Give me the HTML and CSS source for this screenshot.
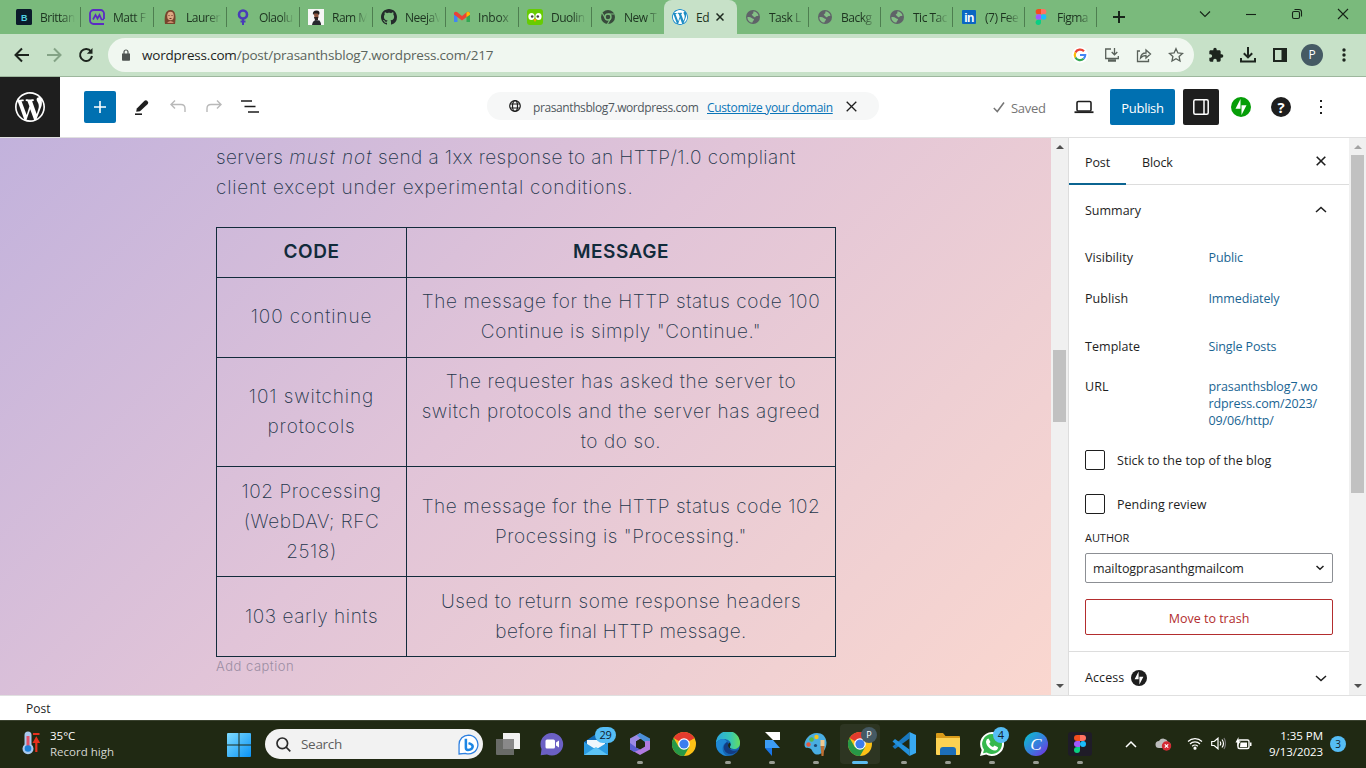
FILE: index.html
```html
<!DOCTYPE html>
<html lang="en">
<head>
<meta charset="utf-8">
<title>Edit Post</title>
<link rel="stylesheet" href="styles.css">
</head>
<body>
<svg class="defs" width="0" height="0">
  <symbol id="wp" viewBox="0 0 20 20"><path d="M20 10c0-5.51-4.49-10-10-10C4.48 0 0 4.49 0 10c0 5.52 4.48 10 10 10 5.51 0 10-4.48 10-10zM7.78 15.37L4.37 6.22c.55-.02 1.17-.08 1.17-.08.5-.06.44-1.13-.06-1.11 0 0-1.45.11-2.37.11-.18 0-.37 0-.58-.01C4.12 2.69 6.87 1.11 10 1.11c2.33 0 4.45.87 6.05 2.34-.68-.11-1.65.39-1.65 1.58 0 .74.45 1.36.9 2.1.35.61.55 1.36.55 2.46 0 1.49-1.4 5-1.4 5l-3.03-8.37c.54-.02.82-.17.82-.17.5-.05.44-1.25-.06-1.22 0 0-1.44.12-2.38.12-.87 0-2.33-.12-2.33-.12-.5-.03-.56 1.2-.06 1.22l.92.08 1.26 3.41zM17.41 10c.24-.64.74-1.87.43-4.25.7 1.29 1.05 2.71 1.05 4.25 0 3.29-1.73 6.24-4.4 7.78.97-2.59 1.94-5.2 2.92-7.78zM6.1 18.09C3.12 16.65 1.11 13.53 1.11 10c0-1.3.23-2.48.72-3.59C3.25 10.3 4.67 14.2 6.1 18.09zm4.03-6.63l2.58 6.98c-.86.29-1.76.45-2.71.45-.79 0-1.57-.11-2.29-.33.81-2.38 1.62-4.74 2.42-7.1z"/></symbol>
  <symbol id="earth" viewBox="0 0 16 16"><circle cx="8" cy="8" r="7" fill="#5f6368"/><path d="M8.500 2.200c2.500.3 4.500 2 5 4.200-1.200.8-2.500.2-3 1.300-.5 1-1.800.6-2.200-.4-.3-.9-1.700-.6-1.500-1.700.2-1 1.500-.8 1.500-1.700zM2.300 8.200c1.700-.3 3.400-.2 4.400.8.8.8 2.400.5 2.300 1.800-.1 1-1.400 1-1.500 2.800-2.900 0-5-2.300-5.200-5.400z" fill="#84bf86"/></symbol>
  <symbol id="chrome" viewBox="0 0 24 24"><circle cx="12" cy="12" r="12" fill="#fbc116"/><path d="M12 12 1.600 6A12 12 0 0 1 22.400 6z" fill="#e33b2e"/><path d="M12 12 22.400 6H12z" fill="#e33b2e"/><path d="M1.600 6A12 12 0 0 0 12 24l5.200-9L12 12 6.800 15z" fill="#279847"/><circle cx="12" cy="12" r="5.800" fill="#fff"/><circle cx="12" cy="12" r="4.600" fill="#3b7ded"/></symbol>
  <symbol id="figma" viewBox="0 0 12 18"><path d="M3 0h3v6H3a3 3 0 0 1 0-6z" fill="#f24e1e"/><path d="M6 0h3a3 3 0 0 1 0 6H6z" fill="#ff7262"/><path d="M3 6h3v6H3a3 3 0 0 1 0-6z" fill="#a259ff"/><circle cx="9" cy="9" r="3" fill="#1abcfe"/><path d="M3 12h3v3a3 3 0 1 1-3-3z" fill="#0acf83"/></symbol>
  <symbol id="bolt" viewBox="0 0 32 32"><circle cx="16" cy="16" r="16"/><path class="zap" d="M15.200 18.700h-8l8-15.500zM16.800 28.800V13.300h8z" fill="#fff"/></symbol>
</svg>
<div class="screen">
  <div class="tabs">
    <div class="tab"><svg class="fav" viewBox="0 0 16 16"><rect width="16" height="16" rx="1.500" fill="#0b1b2b"/><text x="8" y="12" text-anchor="middle" class="fav-b">B</text></svg><span>Brittan</span></div>
    <div class="tab"><svg class="fav" viewBox="0 0 16 16"><path d="M15 10V4.500A3.500 3.500 0 0 0 11.500 1h-7A3.500 3.500 0 0 0 1 4.500v7A3.500 3.500 0 0 0 4.500 15H15" fill="none" stroke="#5b2bc4" stroke-width="1.800"/><path d="M4 10.500 6.500 6l2 3.500 2-3.500 2 4.500H15" fill="none" stroke="#5b2bc4" stroke-width="1.700"/></svg><span>Matt F</span></div>
    <div class="tab"><svg class="fav" viewBox="0 0 16 16"><path d="M3 15C2 8 3 1 8.500 1S14 8 13 15z" fill="#77452d"/><ellipse cx="8.500" cy="7" rx="3.300" ry="4.300" fill="#dfa883"/><path d="M5 14q3.500-4 7 0z" fill="#c98b6b"/><path d="M6.500 6.500h1M9.500 6.500h1M7.500 9.500h2" stroke="#6a3427"/></svg><span>Lauren</span></div>
    <div class="tab"><svg class="fav" viewBox="0 0 16 16"><circle cx="8" cy="5.500" r="4" fill="none" stroke="#493cb8" stroke-width="2.600"/><path d="M8 9v7M5.500 12.500h5" stroke="#493cb8" stroke-width="2"/></svg><span>Olaolu</span></div>
    <div class="tab"><svg class="fav" viewBox="0 0 16 16"><rect width="16" height="16" fill="#f6f6f6"/><path d="M4 16q.5-4 3.500-5l4 .5q1.500 2 1.500 4.500z" fill="#26282e"/><path d="M5.500 3.500h5v5q-1.500 3-3.500 2z" fill="#8d553f"/><path d="M5 6q-.8-4.500 3.500-4.500T11 6L9.500 4.500H6z" fill="#211b1b"/><path d="M6 8h4v3H7z" fill="#2a1f1e"/></svg><span>Ram M</span></div>
    <div class="tab"><svg class="fav" viewBox="0 0 16 16"><path fill="#242b2b" d="M8 0C3.580 0 0 3.580 0 8c0 3.540 2.290 6.530 5.470 7.590.4.070.55-.17.55-.38 0-.19-.01-.82-.01-1.490-2.010.37-2.530-.49-2.690-.94-.09-.23-.48-.94-.82-1.130-.28-.15-.68-.52-.01-.53.63-.01 1.080.58 1.230.82.72 1.210 1.870.87 2.330.66.07-.52.28-.87.51-1.070-1.780-.2-3.640-.89-3.640-3.950 0-.87.31-1.590.82-2.150-.08-.2-.36-1.020.08-2.120 0 0 .67-.21 2.200.82.64-.18 1.320-.27 2-.27s1.360.09 2 .27c1.530-1.040 2.200-.82 2.200-.82.44 1.100.16 1.920.08 2.120.51.56.82 1.270.82 2.150 0 3.070-1.870 3.750-3.650 3.950.29.25.54.73.54 1.480 0 1.070-.01 1.930-.01 2.200 0 .21.15.46.55.38A8 8 0 0 0 16 8c0-4.420-3.580-8-8-8z"/></svg><span>NeejaV</span></div>
    <div class="tab"><svg class="fav" viewBox="0 0 16 16"><path d="M0 3.500v9.500h3.500V6z" fill="#4285f4"/><path d="M16 3.500v9.500h-3.500V6z" fill="#34a853"/><path d="M0 4q1-2 3-1l5 4 5-4q2-1 3 1v1.500l-8 6-8-6z" fill="#ea4335"/><path d="M12.500 3.500 14 2.700q1.500 0 2 1.500v1.500L12.500 8z" fill="#fbbc04"/></svg><span class="wide">Inbox</span></div>
    <div class="tab"><svg class="fav" viewBox="0 0 16 16"><rect width="16" height="16" rx="3" fill="#67cc02"/><ellipse cx="4.500" cy="7.500" rx="3.100" ry="3.500" fill="#fff"/><ellipse cx="11.500" cy="7.500" rx="3.100" ry="3.500" fill="#fff"/><circle cx="5.200" cy="7.500" r="1.300" fill="#444"/><circle cx="10.800" cy="7.500" r="1.300" fill="#444"/><path d="M6 10h4l-2 3z" fill="#f6a500"/></svg><span>Duolin</span></div>
    <div class="tab short nosep"><svg class="fav" viewBox="0 0 16 16"><circle cx="8" cy="8" r="7" fill="#384b3c"/><circle cx="8" cy="8" r="3" fill="none" stroke="#79ba7b" stroke-width="1.400"/><path d="M8 5h6.500M5.500 9.500 2.200 4M10.500 9.500 7.500 15" stroke="#79ba7b" stroke-width="1.200"/></svg><span>New T</span></div>
    <div class="tab short active nosep"><svg class="fav" viewBox="0 0 16 16"><circle cx="8" cy="8" r="8" fill="#fff"/><use href="#wp" x="0" y="0" width="16" height="16" fill="#1e8dc4"/></svg><span>Ed</span><svg class="x" viewBox="0 0 8 8"><path d="M.5.5l7 7m0-7l-7 7" stroke="#1f2a20" stroke-width="1.500"/></svg></div>
    <div class="tab short"><svg class="fav"><use href="#earth"/></svg><span>Task L</span></div>
    <div class="tab short"><svg class="fav"><use href="#earth"/></svg><span>Backg</span></div>
    <div class="tab short"><svg class="fav"><use href="#earth"/></svg><span>Tic Tac</span></div>
    <div class="tab short"><svg class="fav" viewBox="0 0 16 16"><rect x="1" y="1" width="14" height="14" rx="1" fill="#0a66c2"/><text x="8" y="12.500" text-anchor="middle" class="fav-in">in</text></svg><span>(7) Fee</span></div>
    <div class="tab short"><svg class="fav"><use href="#figma"/></svg><span>Figma</span></div>
    <svg class="newtab" viewBox="0 0 12 12"><path d="M6 0v12M0 6h12" stroke="#18261a" stroke-width="2"/></svg>
    <div class="win">
      <svg viewBox="0 0 12 12"><path d="M1 3.500l5 5 5-5" /></svg>
      <svg viewBox="0 0 12 12"><path d="M1 6.500h10"/></svg>
      <svg viewBox="0 0 12 12"><rect x="1.500" y="3.500" width="7" height="7" rx="1.500"/><path d="M3.500 1.500H8Q10.500 1.500 10.500 4v4.500"/></svg>
      <svg viewBox="0 0 12 12"><path d="M1 1l10 10m0-10L1 11"/></svg>
    </div>
  </div>
  <div class="toolbar">
    <svg class="nav" viewBox="0 0 16 16"><path d="M15 8H2.500M8 1.500L1.500 8 8 14.500" stroke="#1c241d"/></svg>
    <svg class="nav" viewBox="0 0 16 16"><path d="M1 8h12.500M8 1.500L14.500 8 8 14.500" stroke="#84a386"/></svg>
    <svg class="nav" viewBox="0 0 16 16"><path d="M13 4.500A6 6 0 1 0 14 9" stroke="#1c241d"/><path d="M14.500 1v5.700H8.800z" fill="#1c241d"/></svg>
    <div class="omni">
      <svg class="lock" viewBox="0 0 8 12"><path d="M0 4.500h8V11q0 .8-.8.8H.8Q0 11.800 0 11z" fill="#4d5350"/><path d="M2 5V3a2 2 0 0 1 4 0v2" fill="none" stroke="#4d5350" stroke-width="1.200"/></svg>
      <div class="url"><b>wordpress.com</b>/post/prasanthsblog7.wordpress.com/217</div>
      <svg class="g" viewBox="0 0 16 16"><circle cx="8" cy="8" r="8" fill="#fff"/><g fill="none" stroke-width="2.200"><path d="M12 4.200A5.300 5.300 0 0 0 3.400 5.500" stroke="#ea4335"/><path d="M3.400 5.500a5.300 5.300 0 0 0 0 5" stroke="#fbbc05"/><path d="M3.400 10.500a5.300 5.300 0 0 0 8.200 1.300" stroke="#34a853"/><path d="M11.600 11.800A5.300 5.300 0 0 0 13.200 8H8" stroke="#4285f4"/></g></svg>
      <svg class="oi" viewBox="0 0 16 16"><path d="M7 2H1.700v9.500h12.600V9M10.500 1v6.500M7.700 5l2.800 2.800L13.300 5"/><path d="M4 13.500h8" stroke-width="2.500"/></svg>
      <svg class="oi" viewBox="0 0 16 16"><path d="M4 4H1.500v10.500h11V12M4.500 11q.5-5 5.500-5V3l4.500 4L10 11V8.500Q6.500 8.500 4.500 11z"/></svg>
      <svg class="oi" viewBox="0 0 16 16"><path d="M8 1.700l1.900 4.200 4.600.5-3.400 3.100.9 4.500L8 11.700 4 14l.9-4.500L1.500 6.400l4.600-.5z"/></svg>
    </div>
    <div class="ext">
      <svg viewBox="0 0 24 24"><path fill="#1d251e" d="M20.500 11H19V7c0-1.100-.9-2-2-2h-4V3.500a2.500 2.500 0 0 0-5 0V5H4c-1.100 0-2 .9-2 2v3.800h1.500a2.700 2.700 0 0 1 0 5.400H2V20c0 1.100.9 2 2 2h3.800v-1.500a2.700 2.700 0 0 1 5.400 0V22H17c1.100 0 2-.9 2-2v-4h1.500a2.500 2.500 0 0 0 0-5z"/></svg>
      <svg viewBox="0 0 16 16"><path d="M8 0v10M3.800 6.200L8 10.400l4.200-4.200M1 11v3.500h14V11" fill="none" stroke="#1d251e" stroke-width="2"/></svg>
      <svg viewBox="0 0 16 16"><path d="M1 1h14v14H1z" fill="#1d251e"/><path d="M3 3h6.500v10H3z" fill="#c7e1c8"/></svg>
      <span class="avatar">P</span>
      <svg viewBox="0 0 16 16"><g fill="#1d251e"><circle cx="8" cy="3" r="1.700"/><circle cx="8" cy="8" r="1.700"/><circle cx="8" cy="13" r="1.700"/></g></svg>
    </div>
  </div>

  <div class="wpbar">
    <div class="wplogo"><svg width="30" height="30" fill="#fff"><use href="#wp"/></svg></div>
    <div class="tools">
      <span class="add"><svg width="12" height="12" viewBox="0 0 12 12"><path d="M6 0v12M0 6h12" stroke="#fff" stroke-width="1.600"/></svg></span>
      <svg viewBox="0 0 16 16"><path d="M2.200 12.800l.6-3.400 7.700-7.600q1.400-1.200 2.900.2t.4 2.900L6 12.300z" fill="#1e1e1e"/><path d="M1 15.200h7" stroke="#1e1e1e" stroke-width="1.600"/></svg>
      <svg viewBox="0 0 16 16"><path d="M5 1.500L1 5.500l4 4M1.500 5.500H11q4 0 4 4V13" fill="none" stroke="#b9b9b9" stroke-width="1.400"/></svg>
      <svg viewBox="0 0 16 16"><path d="M11 1.500l4 4-4 4M14.500 5.500H5q-4 0-4 4V13" fill="none" stroke="#b9b9b9" stroke-width="1.400"/></svg>
      <svg class="list" viewBox="0 0 18 16"><path d="M0 2h11M3.500 7.500h11M7 13h11" stroke="#1e1e1e" stroke-width="1.700"/></svg>
    </div>
    <div class="domain">
      <svg width="12" height="12" viewBox="0 0 12 12" fill="none" stroke="#1e1e1e" stroke-width="1.200"><circle cx="6" cy="6" r="5.300"/><ellipse cx="6" cy="6" rx="2.500" ry="5.300"/><path d="M1 4h10M1 8h10"/></svg>
      <span class="dn">prasanthsblog7.wordpress.com</span><span class="cust">Customize your domain</span>
      <svg width="11" height="11" viewBox="0 0 11 11"><path d="M.7.7l9.600 9.600m0-9.600L.7 10.300" stroke="#1e1e1e" stroke-width="1.300"/></svg>
    </div>
    <div class="right">
      <svg class="check" viewBox="0 0 12 12"><path d="M.8 7l3.500 3.500L11 1.500" fill="none" stroke="#757575" stroke-width="1.500"/></svg>
      <span class="saved">Saved</span>
      <svg class="laptop" viewBox="0 0 20 14"><rect x="3" y="1.500" width="14" height="9.500" rx="1.300" fill="none" stroke="#1e1e1e" stroke-width="1.600"/><path d="M.5 12.200h19" stroke="#1e1e1e" stroke-width="1.800"/></svg>
      <span class="publish">Publish</span>
      <span class="panel"><svg width="16" height="16" viewBox="0 0 16 16"><rect x=".8" y=".8" width="14.400" height="14.400" rx="1.500" fill="none" stroke="#fff" stroke-width="1.500"/><path d="M11 1v14" stroke="#fff" stroke-width="1.500"/></svg></span>
      <svg class="jet" fill="#069e08"><use href="#bolt"/></svg>
      <span class="help">?</span>
      <svg class="dots" viewBox="0 0 4 16"><path d="M1 1h2v2H1zM1 7h2v2H1zM1 13h2v2H1z" fill="#1e1e1e"/></svg>
    </div>
  </div>

  <div class="main">
    <div class="canvas">
      <div class="content">
        <p><span class="p1">servers <i>must not</i> send a 1xx response to an HTTP/1.0 compliant</span><br><span class="p2">client except under experimental conditions.</span></p>
        <table>
          <tr class="r1"><th>CODE</th><th>MESSAGE</th></tr>
          <tr class="r2"><td class="loose">100 continue</td><td>The message for the HTTP status code 100<br>Continue is simply "Continue."</td></tr>
          <tr class="r3"><td class="loose">101 switching<br>protocols</td><td>The requester has asked the server to<br>switch protocols and the server has agreed<br>to do so.</td></tr>
          <tr class="r4"><td>102 Processing<br>(WebDAV; RFC<br>2518)</td><td>The message for the HTTP status code 102<br>Processing is "Processing."</td></tr>
          <tr class="r5"><td>103 early hints</td><td>Used to return some response headers<br><span class="tight">before final HTTP message.</span></td></tr>
        </table>
        <div class="caption">Add caption</div>
      </div>
    </div>
    <div class="scroll s1"><i class="up"></i><i class="thumb"></i><i class="down"></i></div>
    <div class="side">
      <div class="stabs"><span class="on">Post</span><span class="off">Block</span><svg width="10" height="10" viewBox="0 0 10 10"><path d="M.7.7l8.600 8.600m0-8.600L.7 9.300" stroke="#1e1e1e" stroke-width="1.600"/></svg></div>
      <div class="phead">Summary<svg width="12" height="7" viewBox="0 0 12 7"><path d="M1 6l5-4.500L11 6" /></svg></div>
      <div class="row first"><span>Visibility</span><a>Public</a></div>
      <div class="row"><span>Publish</span><a>Immediately</a></div>
      <div class="row tpl"><span>Template</span><a>Single Posts</a></div>
      <div class="row urlrow"><span>URL</span><a>prasanthsblog7.wo<br>rdpress.com/2023/<br>09/06/http/</a></div>
      <div class="chk c1"><i></i>Stick to the top of the blog</div>
      <div class="chk c2"><i></i>Pending review</div>
      <div class="author">AUTHOR</div>
      <div class="select">mailtogprasanthgmailcom<svg width="8" height="6" viewBox="0 0 8 6"><path d="M.5 1L4 4.300 7.500 1"/></svg></div>
      <div class="trash">Move to trash</div>
      <div class="access">Access<svg class="abolt" viewBox="0 0 32 32"><circle cx="16" cy="16" r="16" fill="#1e1e1e"/><path class="zap" d="M15.200 18.700h-8l8-15.500zM16.800 28.800V13.300h8z"/></svg><svg class="chev" width="12" height="7" viewBox="0 0 12 7"><path d="M1 1l5 4.500L11 1" /></svg></div>
    </div>
    <div class="scroll s2"><i class="up"></i><i class="thumb"></i><i class="down"></i></div>
  </div>
  <div class="foot">Post</div>

  <div class="taskbar">
    <svg class="thermo" viewBox="0 0 18 24"><path d="M2.500 4a3.500 3.500 0 0 1 7 0v9.500a5.500 5.500 0 1 1-7 0z" fill="#a8c9ee"/><path d="M6 5v12" stroke="#e0526a" stroke-width="3"/><circle cx="6" cy="17.500" r="3.300" fill="#1b7fd6"/><path d="M11 3h6.500M14.300 21V8M12.300 11l2-3.500 2 3.500z" stroke="#e8301c" stroke-width="2.200" fill="#e8301c"/></svg>
    <div class="weather">35°C<br><span>Record high</span></div>
    <svg class="start" viewBox="0 0 24 24"><defs><linearGradient id="wg" x2="1" y2="1"><stop stop-color="#7fdcff"/><stop offset="1" stop-color="#0a93f5"/></linearGradient></defs><path d="M1 0h10.500v11.500H0V1q0-1 1-1zM12.500 0H23q1 0 1 1v10.500H12.500zM0 12.500h11.500V24H1q-1 0-1-1zM12.500 12.500H24V23q0 1-1 1H12.500z" fill="url(#wg)"/></svg>
    <div class="search"><svg width="15" height="15" viewBox="0 0 15 15" fill="none" stroke="#2b2b2b" stroke-width="1.700"><circle cx="6.300" cy="6.300" r="5.300"/><path d="M10 10l4.300 4.300"/></svg><span>Search</span><svg class="bing" viewBox="0 0 20 20"><path d="M10 1a9 9 0 1 1-3 17.500L1 19V10a9 9 0 0 1 9-9z" fill="#fff" stroke="#2c7fe0" stroke-width="1.200"/><path d="M7.500 4.500v8.500q0 2 2 2.200 4.500-.2 4.500-3.500-.2-2-4-3" fill="none" stroke="#1c86e4" stroke-width="2.400"/></svg></div>
    <div class="apps">
      <div class="app"><svg viewBox="0 0 24 24"><path d="M7 1h16q1 0 1 1v15H7z" fill="#f1f1f1"/><path d="M0 7h18v16H1q-1 0-1-1z" fill="#777" opacity=".85"/></svg></div>
      <div class="app"><svg viewBox="0 0 24 24"><path d="M12 1a11.300 11.300 0 1 1-5 21.500L.7 23.300 1.500 17A11.300 11.300 0 0 1 12 1z" fill="#6b60c4"/><rect x="5.500" y="7.500" width="9.500" height="9" rx="1.500" fill="#fff"/><path d="M16 10.500l3-2v7l-3-2z" fill="#fff"/></svg></div>
      <div class="app"><svg viewBox="0 0 24 24"><path d="M0 10l12-8 12 8v13H0z" fill="#1069b5"/><path d="M3 8h18v8H3z" fill="#eef6fc"/><path d="M0 10l12 7.500L24 10v13H0z" fill="#2a9be2"/><path d="M0 23l12-8 12 8z" fill="#5cc3f5"/></svg><em class="b29">29</em></div>
      <div class="app run"><svg viewBox="0 0 24 24"><path d="M12 1L2 6.500v11L8 20V9.500L14 6z" fill="#9c8be6"/><path d="M12 1l10 5.500V13l-6-3-4-4-3-2.500z" fill="#4b8fd8"/><path d="M22 9v8.500L12 23l-7-4 4-3 3 1.500 5-3V9z" fill="#b07be0"/><path d="M2 11l7 5 3 1.500L6 20l-4-2.500z" fill="#5a5fd0"/><path d="M12 7l4.500 2.500v5L12 17l-4-2.500v-5z" fill="#202913"/></svg></div>
      <div class="app"><svg><use href="#chrome"/></svg></div>
      <div class="app run"><svg viewBox="0 0 24 24"><defs><linearGradient id="eg" x2="1"><stop stop-color="#2aa7e0"/><stop offset=".6" stop-color="#37c6b4"/><stop offset="1" stop-color="#66dd5c"/></linearGradient></defs><circle cx="12" cy="12" r="12" fill="#1565b4"/><path d="M0 11A12 12 0 0 1 24 11c0 4-3 6-6 6-4 0-5-1.500-3.500-3.500C16 10 12 7 8 7c-4 0-7 2-8 4z" fill="url(#eg)"/><path d="M8 7c-4 0-7 2-8 4v1a12 12 0 0 0 12 12C5 22 5 12 11 10q-1-2-3-3z" fill="#1f88d4"/><path d="M11 10c-6 4-3 12 4 12 3 0 6-2 7.500-4.500-4 2.500-10 1-10-3.500 0-2 0-3-1.500-4z" fill="#123c82"/><path d="M13.500 10.500q2 1.500.8 3.500-1.500 2.500 2.700 3-4.500.5-5-3.500 0-2 1.500-3z" fill="#202913"/></svg></div>
      <div class="app run"><svg viewBox="0 0 24 24"><path d="M5 0h15v8h-7z" fill="#fff"/><path d="M5 8h8l7 8H5z" fill="#3c9cf5"/><path d="M5 16h7v8z" fill="#1976e8"/></svg></div>
      <div class="app run"><svg viewBox="0 0 24 24"><path d="M13 1C5 1 .5 8 .5 13c.5 5 5 1.500 7 4.500 1.500 3 3 5.500 7 5 4.500-1 8-6 8-12C22 4 18 1 13 1z" fill="#49aee2"/><circle cx="7.500" cy="7.500" r="2.300" fill="#58b947"/><circle cx="12.500" cy="5" r="2.200" fill="#f2c51c"/><circle cx="4.500" cy="12.500" r="2.200" fill="#e2573e"/><circle cx="11.500" cy="13.500" r="1.600" fill="#1b4b76"/><path d="M16.500 8h4v6h-4z" fill="#f0c890"/><path d="M16.500 14h4l-1 10h-2z" fill="#bd7034"/></svg></div>
      <div class="app run cur"><svg><use href="#chrome"/></svg><em class="bp">P</em></div>
      <div class="app run"><svg viewBox="0 0 24 24"><path d="M.5 14.500L17.500 0v6.500L3 17z" fill="#1878c0"/><path d="M.5 9.500L3 7l14.500 10.500V24z" fill="#2391dc"/><path d="M17.500 0L24 3v18l-6.500 3z" fill="#38a9f2"/></svg></div>
      <div class="app run"><svg viewBox="0 0 24 24"><path d="M0 2q0-1 1-1h6l2.500 3H23q1 0 1 1v4H0z" fill="#d99b19"/><path d="M0 6h24v16q0 1-1 1H1q-1 0-1-1z" fill="#fcd253"/><path d="M4 23v-5q0-3 3-3h10q3 0 3 3v5z" fill="#1c6eb8"/></svg></div>
      <div class="app run"><svg viewBox="0 0 24 24"><path d="M12 0a12 12 0 1 1-5.800 22.500L0 24l1.700-6A12 12 0 0 1 12 0z" fill="#fff"/><path d="M12 2a10 10 0 1 1-5.300 18.500L3 21.300l1-3.500A10 10 0 0 1 12 2z" fill="#35b84d"/><path d="M8.500 6.500l2 3.500-1.300 1.700q1.300 2.500 3.800 3.300l1.500-1.500 3.500 1.700q0 3-3 3.300C10 18 6 13.500 6 9.500q.5-2.800 2.500-3z" fill="#fff"/></svg><em class="b4">4</em></div>
      <div class="app run"><svg viewBox="0 0 24 24"><defs><linearGradient id="cg" x2="1" y2="1"><stop stop-color="#08c4cc"/><stop offset=".5" stop-color="#3382dc"/><stop offset="1" stop-color="#7a28e2"/></linearGradient></defs><circle cx="12" cy="12" r="12" fill="url(#cg)"/><text x="12" y="18" text-anchor="middle" class="cc">C</text></svg></div>
      <div class="app run"><svg viewBox="0 0 24 24"><rect width="24" height="24" rx="3" fill="#1f1c28"/><use href="#figma" x="6" y="3" width="12" height="18"/></svg></div>
    </div>
    <div class="tray">
      <svg class="t1" viewBox="0 0 12 8"><path d="M1 7l5-5 5 5" fill="none" stroke="#fff" stroke-width="1.500"/></svg>
      <svg class="t2" viewBox="0 0 17 14"><path d="M4 11a3.500 3.500 0 0 1 0-7 5 5 0 0 1 9 1q3 1 3 3.500t-3 2.500z" fill="#bdbdbd"/><circle cx="11.500" cy="9" r="4.700" fill="#d42a33"/><path d="M9.800 7.300l3.400 3.400m0-3.400l-3.400 3.400" stroke="#fff" stroke-width="1.200"/></svg>
      <svg class="t3" viewBox="0 0 16 13" fill="none" stroke="#fff" stroke-width="1.200"><path d="M1 4.500a10 10 0 0 1 14 0M3 7a7 7 0 0 1 10 0M5.200 9.200a4 4 0 0 1 5.600 0"/><circle cx="8" cy="11.200" r="1" fill="#fff"/></svg>
      <svg class="t4" viewBox="0 0 15 13" fill="none" stroke="#fff" stroke-width="1.200"><path d="M.7 4.500h2.500L7 1.200v10.600L3.200 8.500H.7zM9 4.500q1.500 2 0 4M11 2.500q3 4 0 8"/><path d="M13 1q3 5.500 0 11" stroke="#777"/></svg>
      <svg class="t5" viewBox="0 0 17 13"><rect x="3" y="3" width="11" height="8.500" rx="1.500" fill="none" stroke="#fff" stroke-width="1.400"/><path d="M5.500 5.500h6.500V10H5zM15 5.500h1.500v3.500H15zM3.500 0L.5 5.500h2.200L2 9.500l3.700-5.200H3.500z" fill="#fff"/></svg>
      <div class="clock">1:35 PM<br>9/13/2023</div>
      <span class="notif">3</span>
    </div>
  </div>
</div>
</body>
</html>
```
FILE: styles.css
```css
* { box-sizing: border-box; }
body { margin: 0; font-family: "Open Sans", "Noto Sans", sans-serif; font-size: 13px; color: #1e1e1e; }
.defs { position: absolute; }
.screen { width: 1366px; height: 768px; overflow: hidden; display: flex; flex-direction: column; background: #fff; }
svg { flex: none; display: block; }
i, em { font-style: normal; }

/* browser tabs */
.tabs { height: 34px; flex: none; background: #7aba7c; display: flex; padding-left: 8px; }
.tab { width: 73px; height: 34px; flex: none; display: flex; align-items: center; padding-left: 8px; position: relative; font-size: 12px; letter-spacing: -.5px; color: #1d3320; }
.tab.short { width: 72px; }
.tab .fav { width: 16px; height: 16px; margin-right: 8px; }
.tab span { width: 36px; white-space: nowrap; -webkit-mask-image: linear-gradient(90deg, #000 60%, transparent 98%); mask-image: linear-gradient(90deg, #000 60%, transparent 98%); }
.tab span.wide { letter-spacing: -.2px; }
.tab::after { content: ""; position: absolute; right: 0; top: 7px; width: 1px; height: 20px; background: #4e7e50; }
.tab.nosep::after { display: none; }
.tab.active { background: #c7e1c8; border-radius: 8px 8px 0 0; width: 73px; }
.tab.active span { width: 13px; -webkit-mask-image: none; mask-image: none; }
.tab.active .x { width: 8px; height: 8px; margin-left: 7px; }
.fav-b { font: bold 9px "Liberation Sans", sans-serif; fill: #4fd0e0; }
.fav-in { font: bold 12px "Liberation Sans", sans-serif; fill: #fff; }
.newtab { width: 12px; height: 12px; margin: 11px 0 0 16px; }
.win { margin-left: auto; display: flex; gap: 34px; padding: 8px 17px 0 0; }
.win svg { width: 12px; height: 12px; fill: none; stroke: #152317; stroke-width: 1.1; }

/* address bar */
.toolbar { height: 43px; flex: none; background: #c7e1c8; border-bottom: 1px solid #9db79d; display: flex; align-items: center; padding-left: 14px; }
.nav { width: 16px; height: 16px; margin-right: 16px; fill: none; stroke-width: 2; }
.omni { flex: none; width: 1086px; height: 34px; margin-left: -2px; background: #f0f7f0; border-radius: 17px; display: flex; align-items: center; padding: 0 10px 0 14px; }
.omni .lock { width: 8px; height: 12px; margin-right: 12px; }
.url { flex: 1; font-size: 13.5px; color: #5b645c; letter-spacing: -.2px; white-space: nowrap; }
.url b { font-weight: 400; color: #1d241e; }
.g { width: 16px; height: 16px; margin-right: 16px; }
.oi { width: 16px; height: 16px; margin-right: 16px; fill: none; stroke: #59615a; stroke-width: 1.3; }
.oi:last-child { margin-right: 0; }
.ext { display: flex; align-items: center; gap: 16px; margin-left: 14px; }
.ext svg { width: 16px; height: 16px; }
.ext .avatar { width: 22px; height: 22px; border-radius: 50%; background: #455a64; color: #fff; font-size: 12px; line-height: 22px; text-align: center; margin: 0 -3px; }

/* editor header */
.wpbar { height: 61px; flex: none; border-bottom: 1px solid #e0e0e0; display: grid; grid-template-columns: 60px 427px 392px 1fr; align-items: center; }
.wplogo { height: 60px; background: #1e1e1e; display: grid; place-items: center; }
.tools { display: flex; align-items: center; padding-left: 24px; gap: 20px; }
.tools svg { width: 16px; height: 16px; }
.tools .add { width: 32px; height: 32px; border-radius: 2px; background: #0070b1; display: grid; place-items: center; margin-right: -2px; }
.tools .add svg { width: 12px; height: 12px; }
.tools .list { width: 18px; margin-left: -1px; }
.domain { height: 28px; margin-top: -2px; border-radius: 14px; background: #f6f7f7; display: flex; align-items: center; padding-left: 22px; font-size: 12px; letter-spacing: -.4px; white-space: nowrap; }
.domain span { padding-top: 2px; }
.dn { color: #50575e; margin-left: 12px; width: 174px; }
.cust { color: #0a75b8; text-decoration: underline; width: 139px; letter-spacing: -.35px; }
.right { display: flex; align-items: center; }
.check { width: 12px; height: 12px; margin-left: 114px; }
.saved { color: #757575; margin-left: 6px; width: 35px; letter-spacing: -.3px; padding-top: 2px; }
.laptop { width: 20px; height: 14px; margin-left: 28px; }
.publish { width: 65px; height: 36px; line-height: 38px; border-radius: 2px; background: #0070b1; color: #fff; text-align: center; margin-left: 16px; letter-spacing: -.3px; }
.panel { width: 36px; height: 36px; border-radius: 2px; background: #1e1e1e; margin-left: 8px; display: grid; place-items: center; }
.jet { width: 20px; height: 20px; margin-left: 12px; }
.help { width: 20px; height: 20px; border-radius: 50%; background: #1e1e1e; color: #fff; font-weight: 700; font-size: 15px; line-height: 20px; text-align: center; margin-left: 20px; }
.dots { width: 4px; height: 16px; margin-left: 28px; }

/* post body */
.main { height: 557px; flex: none; display: flex; }
.canvas { width: 1051px; flex: none; background: linear-gradient(135deg, #c2b2dc 0%, #e1c4d8 46%, #eecfd3 75%, #fad7cf 100%); padding: 5px 0 0 216px; overflow: hidden; }
.content { width: 620px; font-family: Inter, "Open Sans", sans-serif; font-weight: 200; font-size: 19px; line-height: 30px; color: #24364b; letter-spacing: .58px; white-space: nowrap; }
.content p { margin: 0 0 24px; }
.content i { font-style: italic; letter-spacing: 1px; }
.p1 { letter-spacing: .42px; }
.p2 { letter-spacing: .8px; }
.loose { letter-spacing: .9px; }
.tight { letter-spacing: .36px; }
table { width: 620px; table-layout: fixed; border-collapse: collapse; border: 1px solid #122b3b; }
th, td { border: 1px solid #122b3b; padding: 0; text-align: center; vertical-align: middle; }
th { font-weight: 600; color: #122b3b; padding-bottom: 2px; letter-spacing: .5px; }
th:first-child { width: 190px; }
.r1 { height: 50px; } .r2 { height: 80px; } .r3 { height: 109px; } .r4 { height: 110px; } .r5 { height: 80px; }
.r2 td { padding-bottom: 2px; }
.caption { font-size: 13px; line-height: 19px; font-weight: 300; color: #9b8da3; letter-spacing: .5px; }

/* scrollbars */
.scroll { width: 17px; background: #f0f0f0; display: flex; flex-direction: column; flex: none; align-items: center; }
.scroll i { display: block; flex: none; }
.up { border: 4px solid transparent; border-top: 0; border-bottom: 4px solid #505050; margin-top: 7px; }
.down { border: 4px solid transparent; border-bottom: 0; border-top: 4px solid #505050; margin: auto 0 7px; }
.thumb { width: 13px; background: #c1c1c1; }
.s1 .thumb { height: 72px; margin-top: 201px; }
.s2 .up { border-bottom-color: #a3a3a3; }
.s2 .thumb { height: 338px; margin-top: 6px; }

/* settings sidebar */
.side { width: 281px; flex: none; border-left: 1px solid #ddd; overflow: hidden; letter-spacing: -.12px; font-size: 12.5px; }
.stabs { height: 47px; border-bottom: 1px solid #ddd; display: flex; align-items: center; }
.stabs span { height: 47px; line-height: 49px; padding: 0 16px; letter-spacing: -.1px; }
.stabs .on { width: 57px; border-bottom: 2px solid #0b6491; }
.stabs svg { margin: 0 23px 0 auto; }
.phead { height: 50px; display: flex; align-items: center; justify-content: space-between; padding: 0 22px 0 16px; letter-spacing: 0; }
.side svg path { fill: none; }
.side svg .zap { fill: #fff; }
.phead svg, .access .chev { stroke: #1e1e1e; stroke-width: 1.5; margin-top: -2px; }
.row { height: 40px; line-height: 41px; padding-left: 16px; display: flex; }
.row.first { margin-top: 3px; line-height: 40px; }
.row.tpl { margin-top: 8px; }
.row span { width: 123.5px; letter-spacing: .05px; }
.row a { color: #1a6593; white-space: nowrap; }
.row.urlrow { margin-top: 12px; height: 51px; line-height: 17px; }
.chk { margin-left: 16px; height: 20px; display: flex; align-items: center; gap: 12px; letter-spacing: .04px; }
.chk i { width: 20px; height: 20px; border: 1px solid #1e1e1e; border-radius: 2px; }
.c1 { margin-top: 21px; }
.c2 { margin-top: 24px; }
.author { margin: 16px 0 0 16px; height: 16px; line-height: 16px; font-size: 11px; letter-spacing: -.05px; }
.select { margin: 7px 16px 0; height: 30px; border: 1px solid #8c8f94; border-radius: 2px; display: flex; align-items: center; justify-content: space-between; padding: 0 8px 0 7px; letter-spacing: -.08px; }
.select svg { stroke: #1e1e1e; stroke-width: 1.5; }
.trash { margin: 16px 16px 0; height: 36px; line-height: 37px; border: 1px solid #b32d2e; border-radius: 2px; color: #b32d2e; text-align: center; letter-spacing: 0; }
.access { margin-top: 16px; border-top: 1px solid #ddd; height: 52px; display: flex; align-items: center; padding: 0 22px 0 16px; letter-spacing: .1px; }
.abolt { width: 16px; height: 16px; margin-left: 7px; }
.access .chev { margin: 2px 0 0 auto; }

.foot { height: 25px; flex: none; border-top: 1px solid #e0e0e0; line-height: 25px; padding-left: 26px; font-size: 12px; }

/* taskbar */
.taskbar { height: 48px; flex: none; background: #202913; border-top: 1px solid #3a422f; display: flex; align-items: center; color: #fff; font-size: 12px; }
.thermo { width: 18px; height: 24px; margin: -3px 0 0 22px; }
.weather { width: 177px; margin: -2px 0 0 10px; line-height: 16px; letter-spacing: 0; font-size: 11.5px; }
.weather span { color: #d5d7d2; }
.start { width: 24px; height: 24px; }
.search { width: 218px; height: 30px; margin: -1px 0 0 14px; border-radius: 15px; background: #f2f2f2; display: flex; align-items: center; padding: 0 4px 0 11px; color: #5d5d5d; font-size: 13.5px; }
.search span { margin-left: 10px; letter-spacing: -.3px; flex: 1; }
.bing { width: 21px; height: 21px; }
.apps { display: flex; margin: -1px 0 0 5px; }
.app { width: 40px; height: 40px; margin: 0 2px; display: grid; place-items: center; position: relative; border-radius: 4px; }
.app:first-child { margin-left: 0; }
.app svg { width: 24px; height: 24px; }
.run::after { content: ""; position: absolute; bottom: 0; left: 17px; width: 6px; height: 3px; border-radius: 2px; background: #989c92; }
.cur { background: #2d3522; }
.cur::after { width: 16px; left: 12px; background: #5bbcf0; }
.app em { position: absolute; background: #55bdf5; color: #10202c; text-align: center; border-radius: 9px; }
.b29 { left: 19px; top: 3px; width: 21px; height: 16px; line-height: 16px; font-size: 11px; letter-spacing: -.3px; }
.b4 { left: 21px; top: 3px; width: 16px; height: 16px; line-height: 16px; font-size: 11px; }
.app .bp { left: 21px; top: 3px; width: 16px; height: 16px; line-height: 16px; font-size: 9px; background: #455a64; color: #fff; }
.cc { font: italic 17px "Liberation Serif", serif; fill: #fff; }
.tray { display: flex; align-items: center; margin: -2px 0 0 23px; }
.t1 { width: 12px; height: 8px; }
.t2 { width: 17px; height: 14px; margin-left: 18px; }
.t3 { width: 16px; height: 13px; margin-left: 15px; }
.t4 { width: 15px; height: 13px; margin-left: 8px; }
.t5 { width: 17px; height: 13px; margin-left: 9px; }
.clock { width: 71px; text-align: right; line-height: 16px; letter-spacing: -.05px; font-size: 11.5px; }
.notif { width: 16px; height: 16px; border-radius: 50%; background: #55bdf5; color: #10202c; font-size: 10px; line-height: 16px; text-align: center; margin-left: 7px; }
```
